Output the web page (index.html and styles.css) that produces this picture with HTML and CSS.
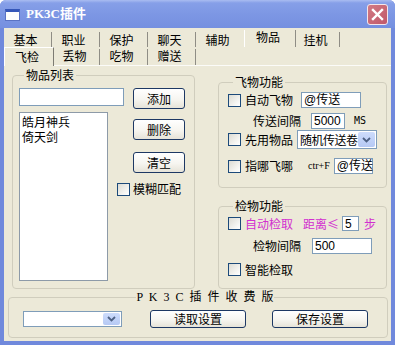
FILE: index.html
```html
<!DOCTYPE html>
<html>
<head>
<meta charset="utf-8">
<link rel="stylesheet" href="styles.css">
</head>
<body>
<div class="window">
  <div class="titlebar">
    <span class="appicon"></span>
    <span class="title">PK3C插件</span>
    <span class="close"><svg width="13" height="13" viewBox="0 0 13 13"><path d="M2 2 L11 11 M11 2 L2 11" stroke="#fff" stroke-width="2.4" stroke-linecap="square"/></svg></span>
  </div>
  <div class="client">
    <div class="tabs">
      <div class="tabrow r1">
        <div class="tab">基本</div>
        <div class="tab">职业</div>
        <div class="tab">保护</div>
        <div class="tab">聊天</div>
        <div class="tab nosep">辅助</div>
        <div class="tab hot">物品</div>
        <div class="tab">挂机</div>
      </div>
      <div class="tabrow r2">
        <div class="tab sel">飞检</div>
        <div class="tab after-sel">丢物</div>
        <div class="tab">吃物</div>
        <div class="tab">赠送</div>
      </div>
    </div>
    <div class="pane">
      <fieldset class="grp items">
        <legend>物品列表</legend>
        <div class="add-row">
          <div class="edit e-item"></div>
          <div class="btn b-add">添加</div>
        </div>
        <div class="list-row">
          <div class="listbox">
            <div class="li">皓月神兵</div>
            <div class="li">倚天剑</div>
          </div>
          <div class="side">
            <div class="btn b-side b-del">删除</div>
            <div class="btn b-side b-clr">清空</div>
            <div class="chk c-fuzzy"><span class="cb"></span><span class="lbl">模糊匹配</span></div>
          </div>
        </div>
      </fieldset>
      <div class="rcol">
        <fieldset class="grp fly">
          <legend>飞物功能</legend>
          <div class="frow f1">
            <span class="cb"></span><span class="lbl">自动飞物</span>
            <div class="edit e-fly1">@传送</div>
          </div>
          <div class="frow f2">
            <span class="lbl ind">传送间隔</span>
            <div class="edit e-ms">5000</div>
            <span class="ms">MS</span>
          </div>
          <div class="frow f3">
            <span class="cb"></span><span class="lbl">先用物品</span>
            <div class="combo c-item"><span class="ctext">随机传送卷</span><span class="drop"><svg width="9" height="6" viewBox="0 0 9 6"><path d="M1 1 L4.5 4.5 L8 1" fill="none" stroke="#4d6185" stroke-width="1.8"/></svg></span></div>
          </div>
          <div class="frow f4">
            <span class="cb"></span><span class="lbl">指哪飞哪</span>
            <span class="key">ctr+F</span>
            <div class="edit e-fly2">@传送</div>
          </div>
        </fieldset>
        <fieldset class="grp pick">
          <legend>检物功能</legend>
          <div class="frow p1">
            <span class="cb"></span><span class="lbl pink">自动检取</span>
            <span class="pink dist">距离≤</span>
            <div class="edit e-step">5</div>
            <span class="pink step">步</span>
          </div>
          <div class="frow p2">
            <span class="lbl ind">检物间隔</span>
            <div class="edit e-pick">500</div>
          </div>
          <div class="frow p3">
            <span class="cb"></span><span class="lbl">智能检取</span>
          </div>
        </fieldset>
      </div>
    </div>
    <fieldset class="grp foot">
      <legend>P K 3 C 插 件 收 费 版</legend>
      <div class="foot-row">
        <div class="combo c-foot"><span class="ctext"></span><span class="drop"><svg width="9" height="6" viewBox="0 0 9 6"><path d="M1 1 L4.5 4.5 L8 1" fill="none" stroke="#4d6185" stroke-width="1.8"/></svg></span></div>
        <div class="btn b-foot b-read">读取设置</div>
        <div class="btn b-foot b-save">保存设置</div>
      </div>
    </fieldset>
  </div>
</div>
</body>
</html>
```
FILE: styles.css
```css
* { box-sizing: border-box; }
html, body { margin: 0; padding: 0; }
body {
  width: 395px; height: 345px; overflow: hidden; background: #ffffff;
  font: 12px/14px "Noto Sans CJK SC", sans-serif; color: #000;
}
.window {
  width: 395px; height: 345px; display: flex; flex-direction: column;
  background: #7089dc; border-radius: 6px 6px 0 0; overflow: hidden;
}
.titlebar {
  height: 28px; flex: none; display: flex; align-items: center;
  padding: 0 7px 0 5px;
  background: linear-gradient(#a9bcf1 0, #869fe8 3px, #7d97e4 50%, #7590e0 100%);
}
.appicon {
  width: 15px; height: 12px; margin-top: 2px; background: #fdfdfd;
  border: 1px solid #5a73c4; border-top: 3px solid #3556b8;
}
.title {
  margin-left: 6px; color: #fff;
  font: bold 13px/16px "Liberation Serif", "Noto Sans CJK SC", serif;
}
.close {
  margin-left: auto; width: 21px; height: 21px; border: 1px solid #f4e6ea;
  border-radius: 3px; background: linear-gradient(135deg, #d27a84, #c0586a);
  display: flex; align-items: center; justify-content: center;
}
.client {
  flex: 1; margin: 0 4px 4px; background: #ece9d8;
  display: flex; flex-direction: column;
}

/* tabs */
.tabs { margin-top: 2px; }
.tabrow { display: flex; align-items: flex-start; }
.tabrow.r1 { height: 17px; }
.tabrow.r2 { height: 18px; }
.tab {
  width: 48px; text-align: center; padding-right: 4px;
  border-right: 1px solid #8f8d85;
}
.r1 .tab { margin-top: 2px; height: 15px; padding-top: 1px; }
.r2 .tab { margin-top: 2px; height: 16px; }
.r1 .tab.nosep { border-right-color: transparent; }
.r1 .tab.hot { padding-top: 0; margin-top: 0; height: 17px; width: 52px; border-left: 1px solid #fff; }
.r1 .tab.hot + .tab { width: 44px; }
.r2 .tab.sel {
  position: relative; margin-top: 0; height: 19px; margin-bottom: -1px;
  padding-top: 2px; width: 50px; background: #ece9d8;
  border-top: 1px solid #fff; border-left: 1px solid #fff; border-right: 1px solid #7d7b73;
}
.r2 .tab.after-sel { width: 46px; }

/* pane */
.pane {
  height: 227px; flex: none; border-top: 1px solid #fbfbf8;
  display: flex; align-items: flex-start; padding-left: 8px;
}
.grp {
  margin: 0; padding: 0; min-width: 0;
  border: 1px solid #d0cdbd; border-radius: 4px;
}
.grp legend { padding: 0 2px; margin-left: 5px; line-height: 14px; height: 14px; }

.items { width: 183px; margin-top: 2px; padding: 0 0 7px 6px; }
.add-row { display: flex; align-items: flex-start; margin-top: 6px; }
.edit {
  background: #fff; border: 1px solid #7f9db9; padding: 0 2px;
  font: 12px/14px "Liberation Sans", "Noto Sans CJK SC", sans-serif;
  display: flex; align-items: center; white-space: nowrap;
}
.e-item { width: 105px; height: 18px; }
.btn {
  display: flex; align-items: center; justify-content: center;
  border: 1px solid #1d3864; border-radius: 3px;
  background: linear-gradient(#ffffff, #f6f5f0 55%, #e6e3d8);
}
.b-add { width: 52px; height: 21px; margin-left: 9px; }
.list-row { display: flex; align-items: flex-start; margin-top: 3px; }
.listbox {
  width: 89px; height: 169px; background: #fff; border: 1px solid #8d9aa8;
  padding: 1px 2px;
}
.li { line-height: 15px; height: 15px; }
.side { margin-left: 9px; display: flex; flex-direction: column; align-items: flex-start; }
.b-side { width: 52px; height: 21px; margin-left: 16px; }
.b-del { margin-top: 7px; }
.b-clr { margin-top: 12px; }
.chk { display: flex; align-items: center; }
.c-fuzzy { margin-top: 9px; }
.c-fuzzy .lbl { margin-left: 3px; }
.cb {
  width: 13px; height: 13px; flex: none; border: 1px solid #1c4a7a;
  background: linear-gradient(135deg, #dcdbd3, #f6f6f3 70%, #ffffff);
}

/* right column */
.rcol { width: 169px; margin-left: 23px; display: flex; flex-direction: column; }
.fly { margin-top: 9px; padding: 0 0 13px 9px; }
.pick { margin-top: 11px; padding: 0 0 12px 9px; }
.frow { display: flex; align-items: center; }
.frow .cb + .lbl { margin-left: 4px; }
.lbl { white-space: nowrap; }
.lbl.ind { margin-left: 25px; }
.f1 { margin-top: 3px; height: 16px; }
.e-fly1 { width: 60px; height: 16px; margin-left: 8px; }
.f2 { margin-top: 5px; height: 16px; }
.e-ms { width: 34px; height: 16px; margin-left: 10px; }
.ms { margin-left: 9px; font: 10px/12px "DejaVu Sans Mono", monospace; }
.f3 { margin-top: 1px; height: 19px; }
.combo {
  display: flex; align-items: stretch; background: #fff;
  border: 1px solid #7f9db9; white-space: nowrap;
}
.ctext { flex: 1; padding-left: 2px; display: flex; align-items: center; letter-spacing: -0.5px; min-width: 0; }
.drop {
  width: 17px; flex: none; margin: 1px; border-radius: 2px;
  background: linear-gradient(#cddcfc, #b6c9f4);
  display: flex; align-items: center; justify-content: center;
}
.c-item { width: 80px; height: 19px; margin-left: 4px; }
.f4 { margin-top: 9px; height: 16px; }
.key { margin-left: 15px; font: 10px/12px "Liberation Serif", serif; }
.e-fly2 { width: 39px; height: 16px; margin-left: 4px; }

.pink { color: #d22fd0; }
.p1 { margin-top: 3px; height: 15px; }
.dist { margin-left: 10px; }
.e-step { width: 17px; height: 15px; margin-left: 3px; }
.step { margin-left: 5px; }
.p2 { margin-top: 7px; height: 16px; }
.e-pick { width: 60px; height: 16px; margin-left: 11px; }
.p3 { margin-top: 9px; height: 13px; }

/* footer */
.foot { margin: -2px 3px 0 4px; padding: 0 0 9px 14px; }
.foot legend {
  margin: 0 auto; padding: 0 1px;
  font: 12px/14px "Liberation Serif", "Noto Sans CJK SC", serif; word-spacing: 3px;
}
.foot-row { display: flex; align-items: center; margin-top: 6px; height: 18px; }
.c-foot { width: 99px; height: 16px; }
.b-foot { width: 96px; height: 18px; }
.b-read { margin-left: 28px; }
.b-save { margin-left: 26px; }
```
